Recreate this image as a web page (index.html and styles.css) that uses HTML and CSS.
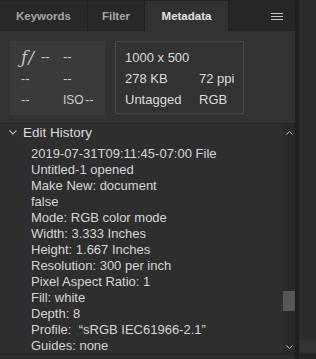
FILE: index.html
```html
<!DOCTYPE html>
<html>
<head>
<meta charset="utf-8">
<link rel="stylesheet" href="styles.css">
</head>
<body>
<div class="app">
  <div class="main">
    <div class="tabs">
      <div class="tab tab-kw">Keywords</div>
      <div class="tab tab-filter">Filter</div>
      <div class="tab tab-meta active">Metadata</div>
      <div class="tab-fill">
        <svg class="menu" width="12" height="8" viewBox="0 0 12 8"><rect x="0" y="0" width="12" height="1" fill="#c8c8c8"/><rect x="0" y="3" width="12" height="1" fill="#c8c8c8"/><rect x="0" y="6" width="12" height="1" fill="#c8c8c8"/></svg>
      </div>
    </div>
    <div class="info">
      <div class="camera">
        <span class="c1 fstop">ƒ/</span><span class="c2">--</span><span class="c3">--</span><span class="c4"></span>
        <span class="c1">--</span><span class="c2"></span><span class="c3">--</span><span class="c4"></span>
        <span class="c1">--</span><span class="c2"></span><span class="c3 iso">ISO</span><span class="c4">--</span>
      </div>
      <div class="file">
        <span>1000 x 500</span><span></span>
        <span>278 KB</span><span>72 ppi</span>
        <span>Untagged</span><span>RGB</span>
      </div>
    </div>
    <div class="history">
      <div class="hist-content">
        <div class="hist-head">
          <svg class="chev" width="8" height="5" viewBox="0 0 8 5"><polyline points="0.5,0.5 4,4 7.5,0.5" fill="none" stroke="#bdbdbd" stroke-width="1.1"/></svg>
          <span>Edit History</span>
        </div>
        <div class="hist-list">
          <div>2019-07-31T09:11:45-07:00 File</div>
          <div>Untitled-1 opened</div>
          <div>Make New: document</div>
          <div>false</div>
          <div>Mode: RGB color mode</div>
          <div>Width: 3.333 Inches</div>
          <div>Height: 1.667 Inches</div>
          <div>Resolution: 300 per inch</div>
          <div>Pixel Aspect Ratio: 1</div>
          <div>Fill: white</div>
          <div>Depth: 8</div>
          <div>Profile: &nbsp;“sRGB IEC61966-2.1”</div>
          <div>Guides: none</div>
        </div>
      </div>
      <div class="scrollbar">
        <svg class="arrow" width="7" height="4" viewBox="0 0 7 4"><polyline points="0.5,3.5 3.5,0.5 6.5,3.5" fill="none" stroke="#bbb" stroke-width="1"/></svg>
        <div class="track"><div class="thumb"></div></div>
        <svg class="arrow" width="7" height="4" viewBox="0 0 7 4"><polyline points="0.5,0.5 3.5,3.5 6.5,0.5" fill="none" stroke="#bbb" stroke-width="1"/></svg>
      </div>
    </div>
    <div class="bottom"></div>
  </div>
  <div class="divider"></div>
  <div class="side">
    <div class="side-top"></div>
    <div class="side-strip"></div>
    <div class="side-bottom"></div>
  </div>
</div>
</body>
</html>
```

FILE: styles.css
```css
* { box-sizing: border-box; }
html, body { margin: 0; padding: 0; }
body {
  width: 316px;
  height: 359px;
  overflow: hidden;
  background: #2b2b2b;
  font-family: "Liberation Sans", Arial, sans-serif;
  color: #d8d8d8;
}
.app {
  display: flex;
  height: 359px;
}
.main {
  width: 295px;
  display: flex;
  flex-direction: column;
  background: #323232;
}
.divider {
  width: 4px;
  background: #1e1e1e;
}
.side {
  flex: 1;
  display: flex;
  flex-direction: column;
  background: #2c2c2c;
}
.side-top { height: 340px; }
.side-strip { height: 13px; background: #323232; }
.side-bottom { flex: 1; background: #262626; }

.tabs {
  height: 31px;
  display: flex;
  background: #232323;
}
.tab {
  display: flex;
  align-items: center;
  justify-content: center;
  font-weight: bold;
  font-size: 11.5px;
  color: #a6a6a6;
  background: #282828;
  border-right: 1px solid #1f1f1f;
  margin-top: 1px;
}
.tab-kw { width: 88px; }
.tab-filter { width: 57px; }
.tab-meta { width: 84px; }
.tab.active {
  background: #323232;
  color: #e2e2e2;
  border-right: 1px solid #1f1f1f;
}
.tab-fill {
  flex: 1;
  display: flex;
  align-items: center;
  justify-content: flex-end;
  padding-right: 12px;
  background: #262626;
  margin-top: 1px;
}
.menu { display: block; margin-top: 1px; }

.info {
  height: 93px;
  display: flex;
  gap: 10px;
  padding: 10px 0 0 10px;
  border-bottom: 1px solid #242424;
}
.camera {
  width: 95px;
  height: 74px;
  background: #3a3a3a;
  display: grid;
  grid-template-columns: 20px 22px 22px 1fr;
  grid-auto-rows: 21.5px;
  padding: 5px 0 0 11px;
  font-size: 13px;
  color: #cfcfcf;
  align-items: center;
}
.camera span { white-space: nowrap; }
.iso { font-size: 12px; }
.fstop {
  font-family: "DejaVu Serif", "Liberation Serif", serif;
  font-style: italic;
  font-size: 17px;
  color: #c8c8c8;
  letter-spacing: 1px;
}
.file {
  width: 129px;
  height: 73px;
  border: 1px solid #4a4a4a;
  display: grid;
  grid-template-columns: 74px 1fr;
  grid-auto-rows: 21px;
  padding: 5px 0 0 9px;
  font-size: 13px;
  color: #dcdcdc;
  align-items: center;
}

.history {
  flex: 1;
  display: flex;
  min-height: 0;
  background: #2e2e2e;
}
.hist-content {
  flex: 1;
  overflow: hidden;
}
.hist-head {
  height: 16px;
  display: flex;
  align-items: center;
  padding-left: 9px;
  font-size: 13.5px;
  color: #dadada;
}
.chev { display: block; margin-right: 6px; margin-top: 1px; }
.hist-list {
  padding: 0 0 0 31px;
  margin-top: 6px;
  font-size: 13px;
  line-height: 16px;
  color: #d6d6d6;
  white-space: nowrap;
}
.scrollbar {
  width: 12px;
  display: flex;
  flex-direction: column;
  align-items: center;
  background: #292929;
  padding: 7px 0 4px;
}
.arrow { display: block; flex: none; }
.track {
  flex: 1;
  width: 12px;
  display: flex;
  flex-direction: column;
  justify-content: flex-end;
  padding-bottom: 34px;
}
.thumb {
  height: 20px;
  background: #565656;
}
.bottom {
  height: 6px;
  border-top: 1px solid #242424;
  background: #2c2c2c;
}
```
